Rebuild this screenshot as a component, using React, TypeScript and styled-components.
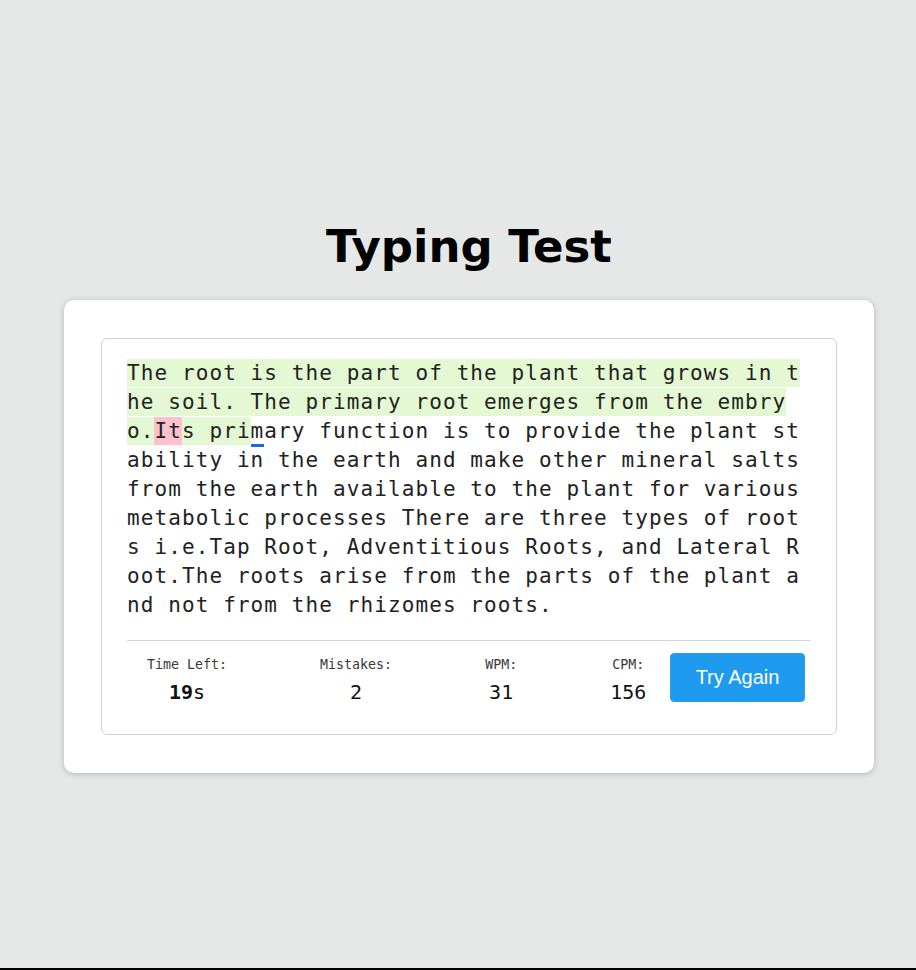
import React from "react";
import styled, { createGlobalStyle, css } from "styled-components";

const GlobalStyle = createGlobalStyle`
  html { background: #000; }
  body { margin: 0; }
  * { box-sizing: border-box; }
`;

const TEXT =
  "The root is the part of the plant that grows in the soil. The primary root emerges from the embryo.Its primary function is to provide the plant stability in the earth and make other mineral salts from the earth available to the plant for various metabolic processes There are three types of roots i.e.Tap Root, Adventitious Roots, and Lateral Root.The roots arise from the parts of the plant and not from the rhizomes roots.";

type Status = "correct" | "incorrect" | "active" | "pending";

const Page = styled.div`
  height: 968px;
  background: #e6e8e7;
  display: flex;
  flex-direction: column;
  align-items: center;
  padding: 221px 0 0 22px;
`;

const Title = styled.h1`
  margin: 0 0 27px;
  font-family: "DejaVu Sans", Verdana, sans-serif;
  font-weight: 700;
  font-size: 45px;
  line-height: 52px;
  color: #000;
`;

const Card = styled.div`
  width: 810px;
  background: #fff;
  border-radius: 10px;
  padding: 38px 37px;
  box-shadow: 0 1px 6px rgba(0, 0, 0, 0.22);
`;

const TypingArea = styled.div`
  border: 1px solid #cfd3d8;
  border-radius: 6px;
  padding: 20px 25px;
`;

const Paragraph = styled.p`
  margin: 0;
  font-family: "DejaVu Sans Mono", monospace;
  font-size: 21px;
  line-height: 29px;
  letter-spacing: 1.09px;
  word-break: break-all;
  color: #222;
`;

const Char = styled.span<{ $status: Status }>`
  padding: 2.3px 0;
  ${({ $status }) =>
    $status === "correct" &&
    css`
      background: #e4f8d3;
    `}
  ${({ $status }) =>
    $status === "incorrect" &&
    css`
      background: #fcc1cc;
    `}
  ${({ $status }) =>
    $status === "active" &&
    css`
      position: relative;
      &::after {
        content: "";
        position: absolute;
        left: 0;
        right: 0;
        bottom: -2px;
        height: 3px;
        background: #1868e4;
      }
    `}
`;

const Footer = styled.div`
  margin-top: 20px;
  border-top: 1px solid #d3d8df;
  padding: 12px 6px 12px 20px;
  display: flex;
  align-items: flex-start;
`;

const StatList = styled.div`
  display: flex;
  gap: 93px;
  margin-top: 4px;
`;

const Stat = styled.div`
  display: flex;
  flex-direction: column;
  align-items: center;
  gap: 9px;
`;

const StatLabel = styled.span`
  font-family: "DejaVu Sans Mono", monospace;
  font-size: 13.3px;
  line-height: 16px;
  color: #3a3a3a;
`;

const StatValue = styled.span`
  font-family: "DejaVu Sans Mono", monospace;
  font-size: 20px;
  line-height: 20px;
  color: #111;
`;

const Strong = styled.b`
  font-weight: 700;
`;

const TryAgainButton = styled.button`
  margin-left: auto;
  width: 135px;
  height: 49px;
  border: 1px solid #2a9ff0;
  border-radius: 4px;
  background: #1e9bef;
  color: #fff;
  font-family: "Liberation Sans", Arial, sans-serif;
  font-size: 20px;
  cursor: pointer;
`;

export default function App() {
  const errStart = TEXT.indexOf("Its primary");
  const active = TEXT.indexOf("mary function");
  const statusOf = (i: number): Status => {
    if (i === errStart || i === errStart + 1) return "incorrect";
    if (i < active) return "correct";
    if (i === active) return "active";
    return "pending";
  };

  return (
    <>
      <GlobalStyle />
      <Page>
        <Title>Typing Test</Title>
        <Card>
          <TypingArea>
            <Paragraph>
              {TEXT.split("").map((ch, i) => (
                <Char key={i} $status={statusOf(i)}>
                  {ch}
                </Char>
              ))}
            </Paragraph>
            <Footer>
              <StatList>
                <Stat>
                  <StatLabel>Time Left:</StatLabel>
                  <StatValue>
                    <Strong>19</Strong>s
                  </StatValue>
                </Stat>
                <Stat>
                  <StatLabel>Mistakes:</StatLabel>
                  <StatValue>2</StatValue>
                </Stat>
                <Stat>
                  <StatLabel>WPM:</StatLabel>
                  <StatValue>31</StatValue>
                </Stat>
                <Stat>
                  <StatLabel>CPM:</StatLabel>
                  <StatValue>156</StatValue>
                </Stat>
              </StatList>
              <TryAgainButton>Try Again</TryAgainButton>
            </Footer>
          </TypingArea>
        </Card>
      </Page>
    </>
  );
}
